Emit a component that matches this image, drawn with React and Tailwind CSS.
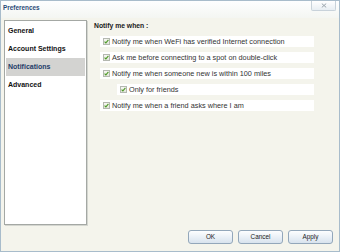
import React from "react";

const rows = [
  { label: "Notify me when WeFi has verified Internet connection", indent: false },
  { label: "Ask me before connecting to a spot on double-click", indent: false },
  { label: "Notify me when someone new is within 100 miles", indent: false },
  { label: "Only for friends", indent: true },
  { label: "Notify me when a friend asks where I am", indent: false },
];

const menu = ["General", "Account Settings", "Notifications", "Advanced"];

function Check() {
  return (
    <span className="w-[7px] h-[7px] shrink-0 border border-[#b4b8b0] bg-gradient-to-b from-[#f7f7f3] to-[#e2e6dc] flex items-center justify-center">
      <svg width="5" height="5" viewBox="0 0 5 5">
        <path d="M0.6 2.6 L1.9 3.9 L4.4 0.9" fill="none" stroke="#4e9a28" strokeWidth="1.1" />
      </svg>
    </span>
  );
}

export default function App() {
  return (
    <div
      className="w-[340px] h-[252px] flex flex-col border border-[#a8bccb] bg-[#f4f4ec] text-[#1a1a1a]"
      style={{ fontFamily: '"Liberation Sans", Arial, sans-serif' }}
    >
      {/* Title bar */}
      <div className="h-[17px] shrink-0 flex items-start justify-between bg-gradient-to-b from-[#fdfeff] to-[#f4f6f2]">
        <span className="pl-[2px] pt-[4px] text-[6.4px] leading-none font-bold text-[#2a4a78]">Preferences</span>
        <button className="w-[25px] h-[10px] mr-[3px] border border-t-0 border-[#c8d2da] rounded-b-[2px] bg-gradient-to-b from-[#ffffff] to-[#e8eef3] flex items-center justify-center">
          <svg width="6" height="5" viewBox="0 0 6 5">
            <path d="M0.8 0.6 L5.2 4.4 M5.2 0.6 L0.8 4.4" stroke="#9aa4ac" strokeWidth="1" />
          </svg>
        </button>
      </div>

      <div className="flex flex-1 pl-[3px] pt-[2px]">
        {/* Sidebar */}
        <div className="w-[83px] h-[205px] shrink-0 border border-[#a4a8a4] bg-white shadow-[1px_1px_0_#d4d6d0] px-[1px] pt-[1px]">
          {menu.map((m) => (
            <div
              key={m}
              className={
                "h-[18px] flex items-center px-[2px] text-[7px] font-bold " +
                (m === "Notifications" ? "bg-[#d3d3d1] text-[#243c68]" : "text-[#111]")
              }
            >
              {m}
            </div>
          ))}
        </div>

        {/* Content */}
        <div className="flex-1 pl-[7px]">
          <div className="pt-[3px] h-[16px] text-[6.8px] font-bold leading-none">Notify me when :</div>
          <div className="flex flex-col gap-[5px] pl-[6px] pr-[25px]">
            {rows.map((r) => (
              <div
                key={r.label}
                className={
                  "h-[11px] bg-white flex items-center gap-[2px] text-[7.3px] text-[#333] " +
                  (r.indent ? "ml-[17px] pl-[3px]" : "pl-[3px]")
                }
              >
                <Check />
                <span className="leading-none">{r.label}</span>
              </div>
            ))}
          </div>
        </div>
      </div>

      {/* Buttons */}
      <div className="flex justify-end gap-[5px] pr-[6px] pb-[7px]">
        {["OK", "Cancel", "Apply"].map((b) => (
          <button
            key={b}
            className="w-[45px] h-[14px] rounded-[3px] border border-[#93a7ba] bg-gradient-to-b from-[#fdfeff] to-[#d8e3ee] text-[6.4px] leading-none text-[#222]"
          >
            {b}
          </button>
        ))}
      </div>
    </div>
  );
}
